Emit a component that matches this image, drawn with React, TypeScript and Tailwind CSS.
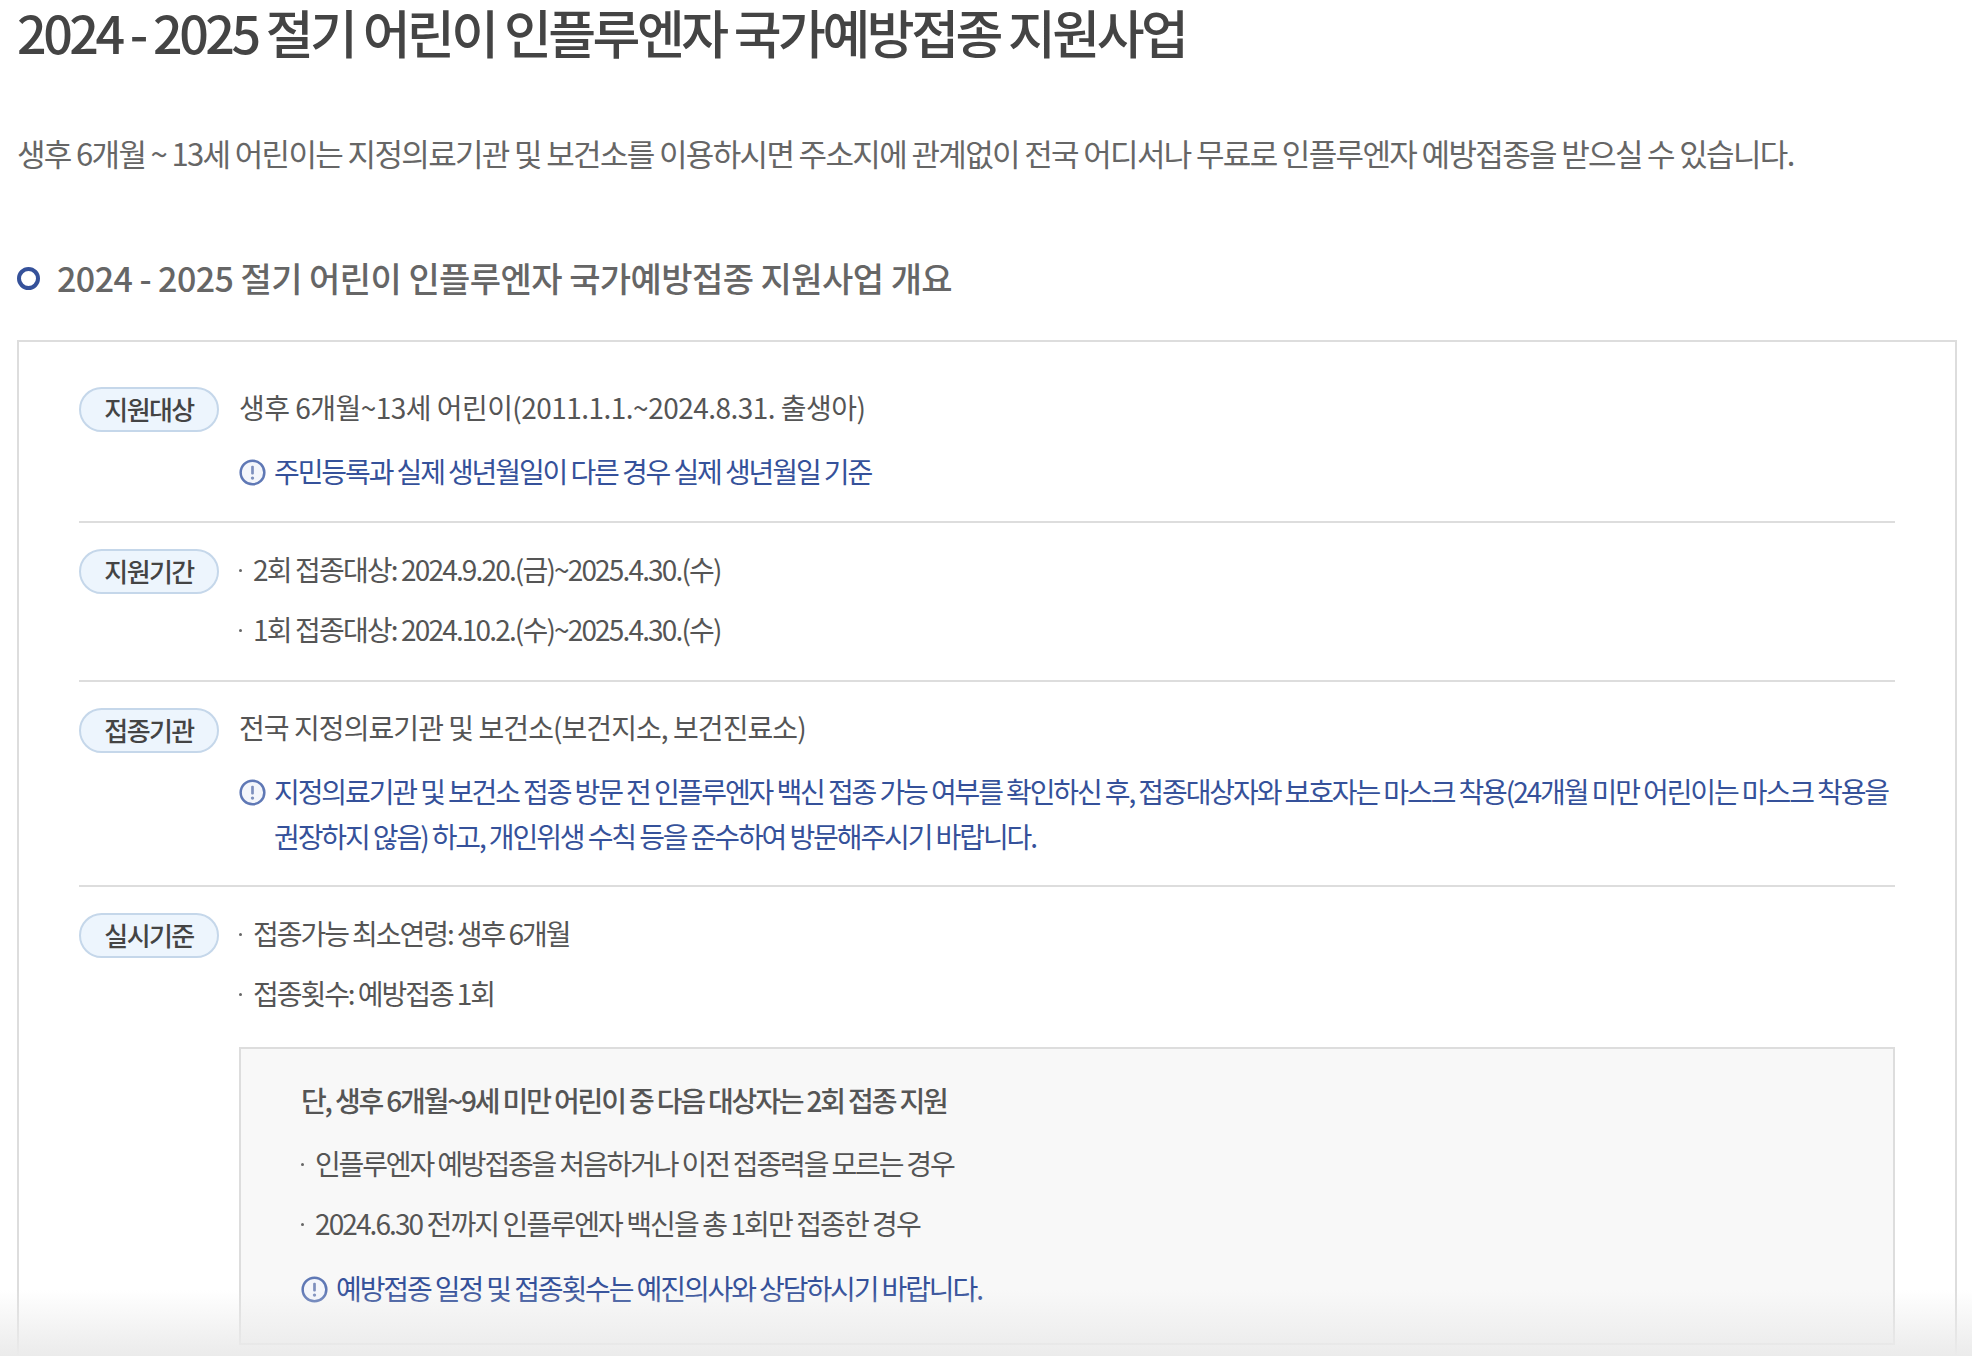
const FONT = "font-['Noto_Sans_CJK_KR','Noto_Sans',sans-serif]"

function NoticeIcon() {
  return (
    <svg width="27" height="27" viewBox="0 0 26 26" className="shrink-0">
      <circle cx="13" cy="13" r="11.4" fill="#f4f6fb" stroke="#5f78b5" strokeWidth="2.4" />
      <rect x="11.7" y="6.5" width="2.6" height="8.5" rx="1" fill="#7d8fbd" />
      <circle cx="13" cy="18.4" r="1.6" fill="#7d8fbd" />
    </svg>
  )
}

function Notice({ children, className = '' }: { children: React.ReactNode; className?: string }) {
  return (
    <div className={`flex gap-[8px] text-[#35519a] ${className}`}>
      <span className="flex h-[47px] items-center">
        <NoticeIcon />
      </span>
      <p className="tracking-[-2.1px]">{children}</p>
    </div>
  )
}

function Dot({ children, className = 'tracking-[-1.9px]' }: { children: React.ReactNode; className?: string }) {
  return (
    <p className={`relative pl-[14px] ${className}`}>
      <span className="absolute left-0 top-[22px] h-[3px] w-[3px] rounded-full bg-[#666]" />
      {children}
    </p>
  )
}

function Row({ label, children, className = '' }: { label: string; children: React.ReactNode; className?: string }) {
  return (
    <div className={`flex ${className}`}>
      <div className="w-[160px] shrink-0">
        <span className="flex h-[45px] w-[140px] items-center justify-center rounded-full border-2 border-[#c5d7ea] bg-[#edf5fd] pb-[2px] text-[26px] font-medium tracking-[-1.6px] text-[#444]">
          {label}
        </span>
      </div>
      <div className="-mt-[2px] min-w-0 flex-1">{children}</div>
    </div>
  )
}

export default function App() {
  return (
    <div className={`relative h-[1356px] overflow-hidden bg-white text-[28px] leading-[45px] text-[#555] ${FONT}`}>
      <div className="pl-[17px] pr-[15px]">
        <h1 className="h-[64px] text-[52px] font-medium leading-[64px] tracking-[-3.5px] text-[#444]">
          2024 - 2025 절기 어린이 인플루엔자 국가예방접종 지원사업
        </h1>
        <p className="mt-[66px] h-[46px] whitespace-nowrap text-[31px] leading-[46px] tracking-[-1.65px] text-[#666]">
          생후 6개월 ~ 13세 어린이는 지정의료기관 및 보건소를 이용하시면 주소지에 관계없이 전국 어디서나 무료로 인플루엔자 예방접종을 받으실 수 있습니다.
        </p>
        <div className="mt-[78px] flex h-[46px] items-center gap-[17px] text-[34px] font-medium tracking-[-0.55px] text-[#666]">
          <span className="mt-[3px] h-[23px] w-[23px] rounded-full border-[4px] border-[#35519a]" />
          <h2>2024 - 2025 절기 어린이 인플루엔자 국가예방접종 지원사업 개요</h2>
        </div>
        <div className="mt-[40px] border-2 border-[#dddddd] px-[60px] pt-[45px] pb-[60px]">
          <Row label="지원대상" className="mb-[26px] border-b-2 border-[#dddddd] pb-[25px]">
            <p className="tracking-[-0.53px]">생후 6개월~13세 어린이(2011.1.1.~2024.8.31. 출생아)</p>
            <Notice className="mt-[19px]">주민등록과 실제 생년월일이 다른 경우 실제 생년월일 기준</Notice>
          </Row>
          <Row label="지원기간" className="mb-[26px] border-b-2 border-[#dddddd] pb-[28px]">
            <Dot className="tracking-[-1.84px]">2회 접종대상: 2024.9.20.(금)~2025.4.30.(수)</Dot>
            <Dot className="mt-[15px] tracking-[-1.84px]">1회 접종대상: 2024.10.2.(수)~2025.4.30.(수)</Dot>
          </Row>
          <Row label="접종기관" className="mb-[26px] border-b-2 border-[#dddddd] pb-[26px]">
            <p className="-mt-[1px] tracking-[-0.93px]">전국 지정의료기관 및 보건소(보건지소, 보건진료소)</p>
            <Notice className="mt-[19px]">
              지정의료기관 및 보건소 접종 방문 전 인플루엔자 백신 접종 가능 여부를 확인하신 후, 접종대상자와 보호자는 마스크 착용(24개월 미만 어린이는 마스크 착용을 권장하지 않음) 하고, 개인위생 수칙 등을 준수하여 방문해주시기 바랍니다.
            </Notice>
          </Row>
          <Row label="실시기준">
            <Dot className="tracking-[-2.05px]">접종가능 최소연령: 생후 6개월</Dot>
            <Dot className="mt-[15px] tracking-[-2.05px]">접종횟수: 예방접종 1회</Dot>
            <div className="mt-[31px] border-2 border-[#dddddd] bg-[#f8f8f8] px-[60px] pt-[29px] pb-[30px]">
              <p className="font-medium tracking-[-2.16px]">단, 생후 6개월~9세 미만 어린이 중 다음 대상자는 2회 접종 지원</p>
              <Dot className="mt-[18px] tracking-[-2.15px]">인플루엔자 예방접종을 처음하거나 이전 접종력을 모르는 경우</Dot>
              <Dot className="mt-[15px] tracking-[-1.9px]">2024.6.30 전까지 인플루엔자 백신을 총 1회만 접종한 경우</Dot>
              <Notice className="mt-[20px]">예방접종 일정 및 접종횟수는 예진의사와 상담하시기 바랍니다.</Notice>
            </div>
          </Row>
        </div>
      </div>
      <div className="pointer-events-none absolute inset-x-0 bottom-0 h-[66px] bg-gradient-to-b from-[#ebebeb00] to-[#ebebeb]" />
    </div>
  )
}
